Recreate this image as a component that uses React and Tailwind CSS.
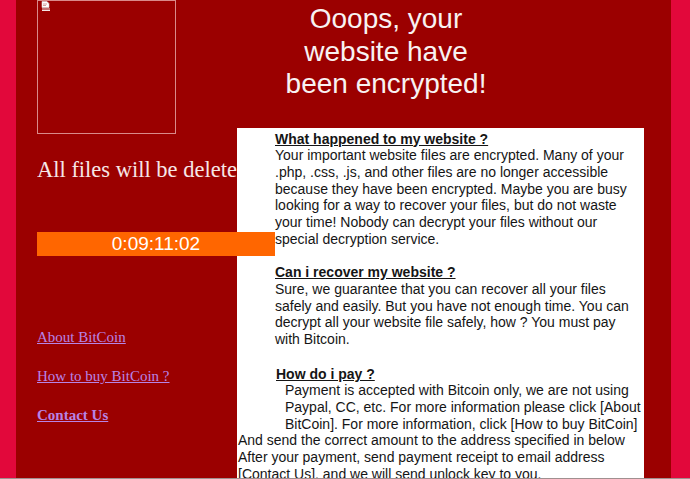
import React from 'react';

const serif = { fontFamily: '"Liberation Serif", "Times New Roman", serif' };

// lines of the message panel, with their left indent
const blocks = [
  { indent: 'pl-[38px]', head: 'What happened to my website ?', lines: [
    'Your important website files are encrypted. Many of your',
    '.php, .css, .js, and other files are no longer accessible',
    'because they have been encrypted. Maybe you are busy',
    'looking for a way to recover your files, but do not waste',
    'your time! Nobody can decrypt your files without our',
    'special decryption service.',
  ] },
  { indent: 'pl-[38px]', head: 'Can i recover my website ?', lines: [
    'Sure, we guarantee that you can recover all your files',
    'safely and easily. But you have not enough time. You can',
    'decrypt all your website file safely, how ? You must pay',
    'with Bitcoin.',
  ] },
];

const payLines = [
  'Payment is accepted with Bitcoin only, we are not using',
  'Paypal, CC, etc. For more information please click [About',
  'BitCoin]. For more information, click [How to buy BitCoin]',
];

const tailLines = [
  'And send the correct amount to the address specified in below',
  'After your payment, send payment receipt to email address',
  '[Contact Us], and we will send unlock key to you.',
];

const BrokenImage = () => (
  <svg width="10" height="11" viewBox="0 0 10 11">
    <path d="M1 0.5h5l2 2v4H1z" fill="#fff" stroke="#ddd" strokeWidth="0.6" />
    <path d="M2 3h4M2 4.5h3" stroke="#c88" strokeWidth="0.8" />
    <path d="M1 8h8M1 9.5h8" stroke="#fff" strokeWidth="0.9" />
  </svg>
);

const App = () => {
  return (
    <div className="w-[690px] h-[479px] overflow-hidden flex border-b border-[#a09090] bg-[#9b0000]">
      {/* left crimson strip */}
      <div className="w-[16px] bg-[#e2083b] shrink-0" />

      {/* left column */}
      <div className="w-[221px] shrink-0 pl-[21px] flex flex-col relative z-10">
        <div className="w-[139px] h-[134px] border border-[#d98a8a] pl-[3px]">
          <BrokenImage />
        </div>
        <div className="mt-[23px] w-[200px] overflow-hidden whitespace-nowrap text-[22.5px] leading-[26px] text-[#f6e6e6]" style={serif}>
          All files will be deleted
        </div>
        <div className="mt-[49px] w-[238px] h-[24px] bg-[#ff6600] flex items-center justify-center text-white text-[19px]" style={{ fontFamily: '"Liberation Sans", Arial, sans-serif' }}>
          0:09:11:02
        </div>
        <div className="mt-[71px] flex flex-col gap-[19px] text-[15px] leading-[20px] text-[#b784e6]" style={serif}>
          <a className="underline w-fit">About BitCoin</a>
          <a className="underline w-fit">How to buy BitCoin ?</a>
          <a className="underline font-bold w-fit">Contact Us</a>
        </div>
      </div>

      {/* right column */}
      <div className="w-[407px] shrink-0 flex flex-col" style={{ fontFamily: '"Liberation Sans", Arial, sans-serif' }}>
        <h1 className="w-[298px] pt-[3px] text-center text-[28px] leading-[32.5px] text-[#f8f2f2] font-normal">
          Ooops, your<br />website have<br />been encrypted!
        </h1>
        <div className="mt-[27px] flex-1 bg-white pt-[3px] text-[14px] leading-[16.7px] text-[#151515] whitespace-nowrap">
          {blocks.map((b, i) => (
            <div key={i} className={`${b.indent} ${i > 0 ? 'mt-[16.7px]' : ''}`}>
              <div className="font-bold underline">{b.head}</div>
              {b.lines.map((l, j) => <div key={j}>{l}</div>)}
            </div>
          ))}
          <div className="mt-[18px] pl-[39px] font-bold underline">How do i pay ?</div>
          <div className="pl-[48px]">
            {payLines.map((l, j) => <div key={j}>{l}</div>)}
          </div>
          <div className="pl-[1px]">
            {tailLines.map((l, j) => <div key={j}>{l}</div>)}
          </div>
        </div>
      </div>

      {/* dark gap and right crimson strip */}
      <div className="w-[27px] shrink-0" />
      <div className="flex-1 bg-[#e2083b]" />
    </div>
  );
};

export default App;
